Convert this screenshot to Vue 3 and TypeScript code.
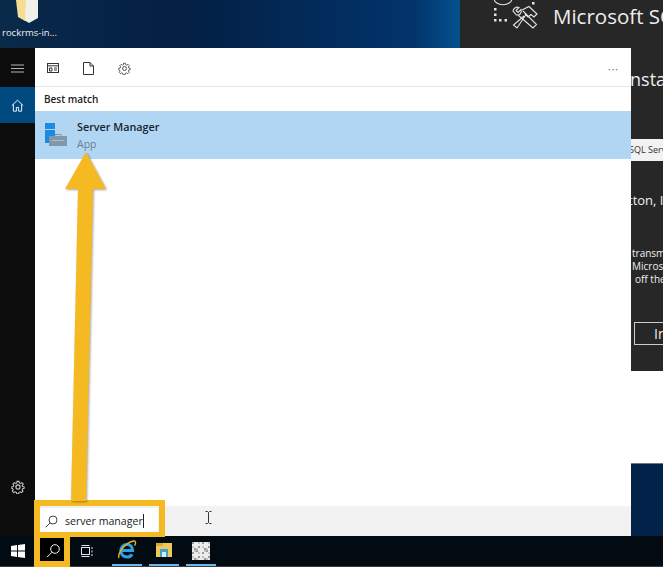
<template>
  <div class="screen">
    <div class="desktop">
      <div class="desk-left">
        <svg class="folder" width="24" height="24" viewBox="0 0 24 24">
          <polygon points="6,0 22,0 22,18 13,23 8,20" fill="#f1f0ea" />
          <polygon points="0,0 10,0 9,21 2,17" fill="#f6dd93" />
        </svg>
        <span class="folder-label">rockrms-in...</span>
      </div>
      <div class="installer">
        <div class="ins-head">
          <svg class="ins-icon" width="46" height="30" viewBox="0 0 46 30" fill="none" stroke="#e4e4e4" stroke-width="1.100">
            <path d="M1-2C1 7 19 7 19-2" />
            <path d="M1 8h2.500v2.500h-2.500zM1 13.500h2.500v2.500h-2.500zM1 19h2.500v2.500h-2.500zM6 19h2.500v2.500h-2.500zM11.500 19h2.500v2.500h-2.500zM39 2h2.500v2.500h-2.500z" fill="#e4e4e4" stroke="none" />
            <path d="M20 11c.5-3 3.500-4.500 6-3.500l-3 3 2 2 3-3c1 3-1 6-4.500 5.500zM25 15l15 13 3.500-3.500L30 11" />
            <path d="M29 10l7-3.500 8 7.500-3 3-3-2.500-3 2.500-3-3M33 14.500 24 28l-3.500-3 10.500-9" />
          </svg>
          <span class="ins-title">Microsoft SQL</span>
        </div>
        <div class="ins-body">
          <span class="ins-h2">Insta</span>
          <div class="ins-bar">SQL Server</div>
          <span class="ins-p1">tton, I</span>
          <div class="ins-lines">
            <span>transmit</span>
            <span>Microsoft</span>
            <span class="ins-indent">off the</span>
          </div>
          <div class="ins-btn">Install</div>
        </div>
      </div>
      <div class="back-window"></div>
    </div>

    <div class="start-panel">
      <aside class="rail">
        <div class="rail-top">
          <div class="rail-item">
            <svg width="13" height="9" viewBox="0 0 13 9" stroke="#b5b5b5" stroke-width="1"><path d="M0 1h13M0 4.500h13M0 8h13" /></svg>
          </div>
          <div class="rail-item rail-home">
            <svg width="13" height="13" viewBox="0 0 13 13" fill="none" stroke="#e8f0f8" stroke-width="1"><path d="M.8 6.600 6.500 1.200l5.700 5.400M2.400 5.400v6.800h3V8.400h2.200v3.800h3V5.400" /></svg>
          </div>
        </div>
        <div class="rail-gear">
          <svg width="14" height="14" viewBox="0 0 24 24" fill="none" stroke="#c6c6c6" stroke-width="2"><circle cx="12" cy="12" r="3.600" /><path :d="gearPath" transform="translate(1.400 .6) scale(.88)" /></svg>
        </div>
      </aside>

      <main class="results">
        <div class="toolbar">
          <div class="tool-group">
            <svg width="12" height="11" viewBox="0 0 12 11" fill="none" stroke="#333" stroke-width="1"><rect x=".5" y=".5" width="11" height="9" /><path d="M.5 2.800h11M2.500 5h2.500v3h-2.500zM7 5h3M7 7h3" /></svg>
            <svg width="11" height="13" viewBox="0 0 11 13" fill="none" stroke="#333" stroke-width="1"><path d="M.5.500h6.500l3.500 3.500v8.500h-10zM7 .500v3.500h3.500" /></svg>
            <svg width="13" height="13" viewBox="0 0 24 24" fill="none" stroke="#444" stroke-width="1.800"><circle cx="12" cy="12" r="3.600" /><path :d="gearPath" transform="translate(1.400 .6) scale(.88)" /></svg>
          </div>
          <span class="more">···</span>
        </div>
        <div class="best">Best match</div>
        <div class="result-row">
          <svg class="srv-icon" width="24" height="24" viewBox="0 0 24 24">
            <rect x="0" y="0" width="10" height="20" fill="#1c8ae0" />
            <path d="M0 6.500h10" stroke="#a8d4f5" stroke-width="1" />
            <rect x="4" y="13" width="18" height="10" fill="#8098ab" />
            <path d="M10 13v-1.500h6v1.500" fill="none" stroke="#8098ab" stroke-width="1" />
            <path d="M7 17.500h12" stroke="#aebfcb" stroke-width="1" />
          </svg>
          <div class="result-text">
            <span class="result-name">Server Manager</span>
            <span class="result-type">App</span>
          </div>
        </div>
        <div class="search-strip">
          <div class="search-box">
            <svg width="13" height="13" viewBox="0 0 13 13" fill="none" stroke="#444" stroke-width="1"><circle cx="8" cy="5" r="4" /><path d="M5 8 .8 12.200" /></svg>
            <span class="search-text">server manager</span><span class="caret"></span>
          </div>
          <svg class="ibeam" width="7" height="13" viewBox="0 0 7 13" fill="none" stroke="#333" stroke-width="1"><path d="M.5.500h2l1 1 1-1h2M3.500 1.500v10M.5 12.500h2l1-1 1 1h2" /></svg>
        </div>
      </main>
    </div>

    <div class="taskbar">
      <div class="task-cell">
        <svg width="14" height="14" viewBox="0 0 14 14" fill="#fff"><path d="M0 2l6-.9v5.400h-6zM7 1l7-1v6.500h-7zM0 7.500h6v5.400l-6-.9zM7 7.500h7v6.500l-7-1z" /></svg>
      </div>
      <div class="task-cell task-search">
        <svg width="14" height="14" viewBox="0 0 14 14" fill="none" stroke="#f4f4f4" stroke-width="1"><circle cx="9" cy="5" r="4.300" /><path d="M6 8.200 1 13.200" /></svg>
      </div>
      <div class="task-cell">
        <svg width="13" height="12" viewBox="0 0 13 12" fill="none" stroke="#e6e6e6" stroke-width="1"><rect x=".5" y="2.500" width="8" height="7" /><path d="M.5.500h8M.5 11.500h8M11 2v2M11 5.500v2M11 9v2" /></svg>
      </div>
      <div class="task-open">
        <svg width="20" height="20" viewBox="0 0 20 20" fill="none"><path d="M5 10.500h10.500c0-3.800-2.300-6-5.500-6-3.600 0-6 2.800-6 6.300 0 3.900 2.600 6.200 6 6.200 2.300 0 4-.9 5-2.800" stroke="#2f9fe4" stroke-width="3.200" /><path d="M2 18C.5 14 7 3 16.500 1c2.200-.4 2.800 2 1 4.500" stroke="#e8ad22" stroke-width="1.400" /></svg>
      </div>
      <div class="task-open">
        <svg width="16" height="14" viewBox="0 0 16 14"><rect x="0" y="0" width="16" height="14" fill="#f2c75a" /><rect x="0" y="0" width="7" height="3" fill="#d9a93c" /><rect x="4" y="6" width="8" height="8" fill="#3d9fd2" /><rect x="6" y="9" width="4" height="5" fill="#d9ecf5" /></svg>
      </div>
      <div class="task-open">
        <svg width="18" height="19" viewBox="0 0 9 9" shape-rendering="crispEdges">
          <rect width="9" height="9" fill="#ececec" />
          <rect v-for="c in qrCells" :key="c.key" :x="c.x" :y="c.y" width="1" height="1" :fill="c.fill" />
        </svg>
      </div>
    </div>

    <div class="hl hl-search"></div>
    <div class="hl hl-task"></div>
    <svg class="arrow" width="46" height="350" viewBox="0 0 46 350">
      <polygon points="22,0 42,37 29,37 22,349 7,349 14,37 1,37" fill="#f5b921" />
    </svg>
  </div>
</template>

<script setup lang="ts">
const gearPath = 'M10 2h4l.6 3 2.400 1 2.600-1.700 2.800 2.800L20.100 9.700l1 2.300 2.900.6v3l-2.900.6-1 2.300 1.700 2.600-2.800 2.800-2.600-1.700-2.400 1-.6 2.800h-4l-.6-2.800-2.400-1-2.600 1.700-2.800-2.800 1.700-2.600-1-2.300L0 15.600v-3l2.900-.6 1-2.300L2.200 7.100 5 4.300l2.600 1.700 2.400-1z'

// blotchy little thumbnail, only a few cells are dark
const qrCells: { key: string; x: number; y: number; fill: string }[] = []
for (let y = 0; y < 9; y++) {
  for (let x = 0; x < 9; x++) {
    const n = (x * 7 + y * 13 + x * y * 3) % 5
    if (n < 2) qrCells.push({ key: x + '-' + y, x, y, fill: n === 0 ? '#9a9a9a' : '#c4c4c4' })
  }
}
</script>

<style>
html, body { margin: 0; padding: 0; background: #000; }
</style>

<style scoped>
.screen {
  position: relative;
  width: 663px;
  height: 567px;
  overflow: hidden;
  font-family: "Open Sans", "Noto Sans", sans-serif;
  background: #04233f;
  display: flex;
  flex-direction: column;
}
.desktop {
  position: absolute;
  inset: 0 0 31px 0;
  display: flex;
  background: #02224a;
}
.desk-left {
  width: 460px;
  height: 48px;
  background: linear-gradient(90deg, #0a2a4a 0%, #031f42 40%, #02346c 90%, #04518f 100%);
  color: #eee;
  font-size: 9.500px;
  box-sizing: border-box;
  padding-left: 2px;
  display: flex;
  flex-direction: column;
}
.folder { margin-left: 14px; flex: none; }
.folder-label { margin-top: 2px; }
.installer {
  width: 203px;
  height: 371px;
  background: #272727;
  color: #eee;
  position: relative;
}
.back-window {
  position: absolute;
  left: 631px;
  top: 371px;
  width: 32px;
  height: 92px;
  background: #fff;
  border-bottom: 1px solid #777;
}
.ins-head {
  display: flex;
  align-items: flex-start;
  gap: 14px;
  padding: 0 0 0 33px;
  height: 48px;
}
.ins-icon { flex: none; }
.ins-title {
  font-size: 20.500px;
  line-height: 32px;
  white-space: nowrap;
}
.ins-body {
  position: absolute;
  left: 171px;
  top: 48px;
  width: 32px;
  height: 323px;
  overflow: hidden;
}
.ins-h2 { position: absolute; left: -6px; top: 19px; font-size: 18px; }
.ins-bar {
  position: absolute;
  left: -2px;
  top: 91px;
  width: 34px;
  height: 22px;
  background: #f2f2f2;
  color: #333;
  font-size: 9px;
  line-height: 22px;
  white-space: nowrap;
  overflow: hidden;
}
.ins-p1 { position: absolute; left: -3px; top: 143px; font-size: 13px; white-space: nowrap; }
.ins-lines {
  position: absolute;
  left: 1px;
  top: 199px;
  display: flex;
  flex-direction: column;
  font-size: 10px;
  line-height: 13px;
  white-space: nowrap;
}
.ins-indent { padding-left: 3px; }
.ins-btn {
  position: absolute;
  left: 3px;
  top: 274px;
  width: 60px;
  height: 21px;
  border: 1px solid #ccc;
  font-size: 14px;
  line-height: 21px;
  padding-left: 19px;
}
.start-panel {
  display: flex;
  height: 488px;
  margin-top: 48px;
  position: relative;
  width: 631px;
  flex: none;
}
.rail {
  width: 35px;
  background: #0c0c0c;
  display: flex;
  flex-direction: column;
  justify-content: space-between;
}
.rail-top { padding-top: 2px; }
.rail-item {
  height: 37px;
  display: flex;
  align-items: center;
  justify-content: center;
}
.rail-home { background: #004a80; height: 36px; }
.rail-gear {
  height: 38px;
  margin-bottom: 30px;
  display: flex;
  align-items: center;
  justify-content: center;
}
.results {
  flex: 1;
  background: #fff;
  display: flex;
  flex-direction: column;
}
.toolbar {
  border-bottom: 1px solid #e6e6e6;
  display: flex;
  align-items: center;
  justify-content: space-between;
  padding: 3px 12px 0 12px;
  box-sizing: border-box;
  height: 39px;
}
.tool-group {
  display: flex;
  align-items: center;
  gap: 24px;
}
.more { font-size: 10px; color: #555; letter-spacing: 1px; }
.best {
  height: 24px;
  line-height: 24px;
  padding-left: 9px;
  font-size: 10px;
  font-weight: 600;
  color: #222;
}
.result-row {
  height: 48px;
  background: #b1d6f3;
  display: flex;
  align-items: center;
  gap: 8px;
  padding-left: 10px;
}
.srv-icon { flex: none; }
.result-text {
  display: flex;
  flex-direction: column;
  gap: 3px;
}
.result-name {
  font-size: 10.800px;
  font-weight: 600;
  color: #16232e;
}
.result-type {
  font-size: 10.500px;
  color: #6a7f90;
}
.search-strip {
  margin-top: auto;
  height: 30px;
  background: #f2f2f2;
  display: flex;
  align-items: center;
  padding-left: 5px;
  box-sizing: border-box;
  flex: none;
}
.search-box {
  width: 118px;
  height: 26px;
  background: #fff;
  display: flex;
  align-items: center;
  box-sizing: border-box;
  padding-left: 5px;
  gap: 7px;
}
.search-text { font-size: 10.600px; color: #222; white-space: nowrap; }
.caret {
  width: 1px;
  height: 14px;
  background: #222;
  margin-left: -7px;
}
.ibeam { margin-left: 47px; margin-top: -8px; }
.taskbar {
  height: 31px;
  background: #020a12;
  display: flex;
  position: relative;
  flex: none;
  box-sizing: border-box;
  border-bottom: 1px solid #3a3a3a;
}
.task-cell {
  width: 35px;
  display: flex;
  align-items: center;
  justify-content: center;
}
.task-search { background: #000; }
.task-open {
  width: 30px;
  margin-left: 7px;
  display: flex;
  align-items: center;
  justify-content: center;
  box-sizing: border-box;
  border-bottom: 2px solid #6cb8ea;
}
.hl {
  position: absolute;
  border: 6px solid #f5b921;
  box-sizing: border-box;
}
.hl-search {
  left: 34px;
  top: 500px;
  width: 131px;
  height: 37px;
  border-bottom-width: 5px;
}
.hl-task {
  left: 34px;
  top: 536px;
  width: 36px;
  height: 31px;
  border-top-width: 2px;
}
.arrow {
  position: absolute;
  left: 64px;
  top: 152px;
  filter: drop-shadow(1px 1px 1px rgba(0, 0, 0, 0.35));
}
</style>
